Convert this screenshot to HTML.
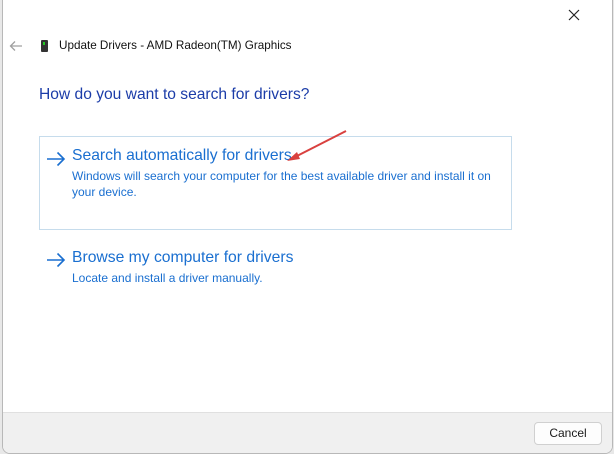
<!DOCTYPE html>
<html><head><style>
body{margin:0;width:614px;height:454px;background:#e8e8e8;position:relative;overflow:hidden;font-family:"Segoe UI","Liberation Sans",sans-serif;}
.win{position:absolute;left:2px;top:-8px;width:609px;height:460px;background:#fff;border:1px solid #b8b8b8;border-radius:8px;overflow:hidden;}
.foot{position:absolute;left:0;right:0;bottom:0;height:40px;background:#f0f0f0;border-top:1px solid #e0e0e0;}
.btn{position:absolute;left:531px;top:9px;width:66px;height:21px;background:#fdfdfd;border:1px solid #d0d0d0;border-radius:4px;font-size:12px;text-align:center;line-height:21px;color:#1a1a1a;}
.t{position:absolute;white-space:nowrap;}
.box{position:absolute;left:36px;top:143px;width:471px;height:92px;border:1px solid #c6dcec;}
</style></head><body>
<div class="win">
<svg style="position:absolute;left:565px;top:16px" width="12" height="12"><path d="M1 1L11 11M11 1L1 11" stroke="#222" stroke-width="1.2"/></svg>
<svg style="position:absolute;left:6px;top:47px" width="14" height="12"><path d="M13 6H2M6 1.5L1.5 6L6 10.5" stroke="#a0a0a0" stroke-width="1.3" fill="none"/></svg>
<div style="position:absolute;left:38px;top:47px;width:7px;height:12px;background:#333;border-radius:1px"><div style="position:absolute;left:2px;top:2px;width:2px;height:3px;background:#2c2"></div></div>
<div class="t" style="left:56px;top:46px;font-size:11.7px;color:#111">Update Drivers - AMD Radeon(TM) Graphics</div>
<div class="t" style="left:36px;top:93px;font-size:15.6px;color:#1b3ca8">How do you want to search for drivers?</div>
<div class="box"></div>
<svg style="position:absolute;left:43px;top:158px" width="20" height="16"><path d="M1 8H18M11.5 1.5L18 8L11.5 14.5" stroke="#1a6fd0" stroke-width="1.6" fill="none"/></svg>
<div class="t" style="left:69px;top:154px;font-size:15.7px;color:#1a6fd0">Search automatically for drivers</div>
<div class="t" style="left:69px;top:175px;font-size:12px;color:#1a6fd0;line-height:16px">Windows will search your computer for the best available driver and install it on<br>your device.</div>
<svg style="position:absolute;left:43px;top:259px" width="20" height="16"><path d="M1 8H18M11.5 1.5L18 8L11.5 14.5" stroke="#1a6fd0" stroke-width="1.6" fill="none"/></svg>
<div class="t" style="left:69px;top:256px;font-size:15.7px;color:#1a6fd0">Browse my computer for drivers</div>
<div class="t" style="left:69px;top:278px;font-size:12px;color:#1a6fd0">Locate and install a driver manually.</div>
<svg style="position:absolute;left:280px;top:135px" width="70" height="40"><line x1="63" y1="3" x2="10" y2="30" stroke="#d9413f" stroke-width="2"/><polygon points="4,33 14,24 17,31" fill="#d9413f"/></svg>
<div class="foot"><div class="btn">Cancel</div></div>
</div>
</body></html>
